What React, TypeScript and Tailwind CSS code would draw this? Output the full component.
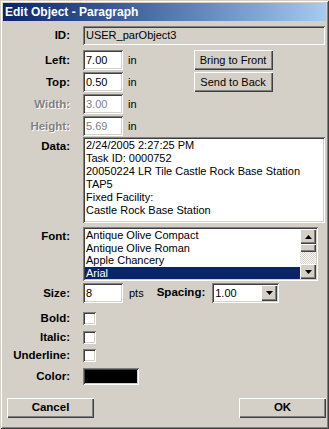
import React from "react";

const font = { fontFamily: '"Liberation Sans", Arial, sans-serif' };

const sunken =
  "shadow-[inset_1px_1px_#808080,inset_-1px_-1px_#ffffff,inset_2px_2px_#404040,inset_-2px_-2px_#d4d0c8]";
const raised =
  "shadow-[inset_1px_1px_#ffffff,inset_-1px_-1px_#404040,inset_-2px_-2px_#808080]";

function Label({ children, disabled, top }: { children: React.ReactNode; disabled?: boolean; top?: boolean }) {
  return (
    <div
      className={`w-[67px] shrink-0 text-right text-[11.5px] font-bold leading-[13px] ${top ? "self-start pt-[3px]" : ""} ${
        disabled ? "text-[#808080] [text-shadow:1px_1px_0_#ffffff]" : "text-black"
      }`}
    >
      {children}
    </div>
  );
}

function Input({ value, w, disabled }: { value: string; w: string; disabled?: boolean }) {
  return (
    <div
      className={`${w} h-[20px] bg-white ${sunken} pl-[3px] flex items-center text-[11px] ${
        disabled ? "text-[#808080]" : "text-black"
      }`}
    >
      {value}
    </div>
  );
}

function Button({ children, w, bold }: { children: React.ReactNode; w: string; bold?: boolean }) {
  return (
    <div
      className={`${w} h-[20px] bg-[#d4d0c8] ${raised} flex items-center justify-center ${
        bold ? "font-bold text-[11.5px]" : "text-[11px]"
      } text-black`}
    >
      {children}
    </div>
  );
}

function Check() {
  return <div className={`w-[13px] h-[13px] bg-white ${sunken}`} />;
}

function Arrow({ up }: { up?: boolean }) {
  return (
    <svg width="7" height="4" viewBox="0 0 7 4">
      {up ? <polygon points="3.5,0 7,4 0,4" fill="#000" /> : <polygon points="0,0 7,0 3.5,4" fill="#000" />}
    </svg>
  );
}

export default function App() {
  return (
    <div
      style={font}
      className="w-[329px] h-[429px] bg-[#d4d0c8] p-[3px] flex flex-col shadow-[inset_1px_1px_#d4d0c8,inset_-1px_-1px_#404040,inset_2px_2px_#ffffff,inset_-2px_-2px_#808080]"
    >
      <div className="h-[18px] shrink-0 bg-gradient-to-r from-[#0a246a] to-[#a6caf0] flex items-center pl-[2px] text-white text-[12px] font-bold">
        Edit Object - Paragraph
      </div>

      <div className="flex flex-col pt-[5px] pr-[1px]">
        {/* ID */}
        <div className="flex items-center">
          <Label>ID:</Label>
          <div className={`ml-[13px] flex-1 h-[19px] bg-[#d4d0c8] ${sunken} pl-[3px] flex items-center text-[11px] text-black`}>
            USER_parObject3
          </div>
        </div>

        {/* Left/Top/Width/Height with buttons */}
        <div className="flex mt-[5px]">
          <div className="flex flex-col gap-[2px]">
            {[
              ["Left:", "7.00", false],
              ["Top:", "0.50", false],
              ["Width:", "3.00", true],
              ["Height:", "5.69", true],
            ].map(([l, v, d]) => (
              <div key={l as string} className="flex items-center">
                <Label disabled={d as boolean}>{l}</Label>
                <div className="ml-[13px]">
                  <Input value={v as string} w="w-[40px]" disabled={d as boolean} />
                </div>
                <span className="ml-[5px] text-[11px] text-black">in</span>
              </div>
            ))}
          </div>
          <div className="ml-[57px] flex flex-col gap-[2px]">
            <Button w="w-[79px]">Bring to Front</Button>
            <Button w="w-[79px]">Send to Back</Button>
          </div>
        </div>

        {/* Data */}
        <div className="flex mt-[1px]">
          <Label top>Data:</Label>
          <div className={`ml-[13px] flex-1 h-[86px] bg-white ${sunken} px-[3px] pt-[2px] text-[11px] leading-[13px] text-black`}>
            <div>2/24/2005 2:27:25 PM</div>
            <div>Task ID: 0000752</div>
            <div>20050224 LR Tile Castle Rock Base Station</div>
            <div>TAP5</div>
            <div>Fixed Facility:</div>
            <div>Castle Rock Base Station</div>
          </div>
        </div>

        {/* Font */}
        <div className="flex mt-[4px]">
          <Label top>Font:</Label>
          <div className={`ml-[13px] w-[235px] h-[54px] bg-white ${sunken} p-[2px] flex`}>
            <div className="flex-1 flex flex-col text-[11px] leading-[12.5px] text-black">
              <div className="pl-[1px]">Antique Olive Compact</div>
              <div className="pl-[1px]">Antique Olive Roman</div>
              <div className="pl-[1px]">Apple Chancery</div>
              <div className="pl-[1px] bg-[#0a246a] text-white">Arial</div>
            </div>
            <div className="w-[16px] flex flex-col bg-[repeating-conic-gradient(#d4d0c8_0%_25%,#ffffff_0%_50%)] bg-[length:2px_2px]">
              <div className={`h-[15px] bg-[#d4d0c8] ${raised} flex items-center justify-center`}>
                <Arrow up />
              </div>
              <div className={`h-[8px] bg-[#d4d0c8] ${raised}`} />
              <div className="flex-1" />
              <div className={`h-[15px] bg-[#d4d0c8] ${raised} flex items-center justify-center`}>
                <Arrow />
              </div>
            </div>
          </div>
        </div>

        {/* Size / Spacing */}
        <div className="flex items-center mt-[2px]">
          <Label>Size:</Label>
          <div className="ml-[13px]">
            <Input value="8" w="w-[40px]" />
          </div>
          <span className="ml-[6px] text-[11px] text-black">pts</span>
          <span className="ml-[13px] text-[11.5px] font-bold text-black">Spacing:</span>
          <div className={`ml-[7px] w-[67px] h-[20px] bg-white ${sunken} p-[2px] flex`}>
            <div className="flex-1 pl-[1px] text-[11px] leading-[16px] text-black">1.00</div>
            <div className={`w-[16px] h-[16px] bg-[#d4d0c8] ${raised} flex items-center justify-center`}>
              <Arrow />
            </div>
          </div>
        </div>

        {/* Checkboxes */}
        <div className="flex flex-col gap-[5.5px] mt-[9px]">
          {["Bold:", "Italic:", "Underline:"].map((l) => (
            <div key={l} className="flex items-center">
              <Label>{l}</Label>
              <div className="ml-[13px]">
                <Check />
              </div>
            </div>
          ))}
          <div className="flex items-center">
            <Label>Color:</Label>
            <div className={`ml-[13px] w-[56px] h-[17px] bg-black ${sunken}`} />
          </div>
        </div>
      </div>

      <div className="mt-auto mb-[8px] flex justify-between pl-[4px]">
        <Button w="w-[87px]" bold>
          Cancel
        </Button>
        <Button w="w-[87px]" bold>
          OK
        </Button>
      </div>
    </div>
  );
}
